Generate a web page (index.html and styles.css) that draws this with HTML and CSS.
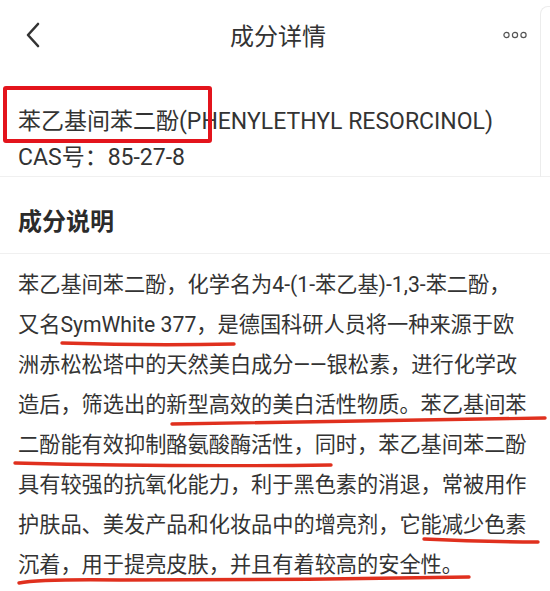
FILE: index.html
```html
<!DOCTYPE html>
<html lang="zh-CN">
<head>
  <meta charset="UTF-8">
  <meta name="viewport" content="width=device-width, initial-scale=1.0">
  <title>成分详情</title>
  <link rel="stylesheet" href="styles.css">
</head>
<body>

  <!-- Top bar -->
  <header class="topbar">
    <svg class="back" width="16" height="26" viewBox="0 0 16 26">
      <path d="M13 2 L3 13 L13 24" fill="none" stroke="#333" stroke-width="2.6" stroke-linecap="round" stroke-linejoin="round"/>
    </svg>
    <h1 class="topbar-title">成分详情</h1>
    <svg class="more" width="24" height="8" viewBox="0 0 24 8">
      <circle cx="3.5" cy="4" r="2.6" fill="none" stroke="#555" stroke-width="1.2"/>
      <circle cx="12" cy="4" r="2.6" fill="none" stroke="#555" stroke-width="1.2"/>
      <circle cx="20.5" cy="4" r="2.6" fill="none" stroke="#555" stroke-width="1.2"/>
    </svg>
  </header>

  <!-- Ingredient name -->
  <section class="info">
    <div class="info-name">苯乙基间苯二酚(PHENYLETHYL RESORCINOL)</div>
    <div class="info-cas">CAS号：85-27-8</div>
  </section>

  <!-- Description -->
  <section class="desc-head">
    <h2>成分说明</h2>
  </section>

  <section class="desc">
    <p>苯乙基间苯二酚，化学名为4-(1-苯乙基)-1,3-苯二酚，<br>又名SymWhite 377，是德国科研人员将一种来源于欧<br>洲赤松松塔中的天然美白成分——银松素，进行化学改<br>造后，筛选出的新型高效的美白活性物质。苯乙基间苯<br>二酚能有效抑制酪氨酸酶活性，同时，苯乙基间苯二酚<br>具有较强的抗氧化能力，利于黑色素的消退，常被用作<br>护肤品、美发产品和化妆品中的增亮剂，它能减少色素<br>沉着，用于提亮皮肤，并且有着较高的安全性。</p>
  </section>

  <!-- Hand drawn marks on top of the screenshot -->
  <div class="side-panel"></div>
  <div class="mark-box"></div>
  <svg class="marks" width="550" height="591" viewBox="0 0 550 591">
    <g fill="none" stroke="#e0301e" stroke-width="3.4" stroke-linecap="round">
      <path d="M62 343 Q150 346 234 344"/>
      <path d="M172 424 Q360 421 545 418"/>
      <path d="M15 463 Q170 467 331 465"/>
      <path d="M424 539 Q480 542 538 542"/>
      <path d="M19 583 Q40 579 120 580 Q300 580 469 577"/>
    </g>
  </svg>

</body>
</html>
```

FILE: styles.css
```css
body {
  margin: 0;
  width: 550px;
  height: 591px;
  overflow: hidden;
  position: relative;
  background: #fff;
  color: #333;
  font-family: Roboto, "Noto Sans CJK SC", sans-serif;
}
/* Top bar */
.topbar {
  height: 68px;
  display: flex;
  align-items: center;
  justify-content: space-between;
  padding: 0 23px 0 25px;
}
.back {
  margin-top: 2px;
}
.topbar-title {
  margin: 1px 0 0 12px;
  font-size: 24px;
  font-weight: 400;
  color: #333;
}
.more {
  margin-top: 2px;
}
/* Name block */
.info {
  height: 72px;
  padding: 36px 18px 0;
  border-bottom: 1px solid #f0f0f0;
  font-size: 23px;
  line-height: 36px;
}
.desc-head {
  height: 68px;
  display: flex;
  align-items: center;
  padding: 8px 18px 0;
  border-bottom: 1px solid #f0f0f0;
}
.desc-head h2 {
  margin: 0;
  font-size: 24px;
  font-weight: 700;
  color: #2b2b2b;
}
.desc {
  padding: 11px 18px 0;
}
.desc p {
  margin: 0;
  font-size: 21.2px;
  line-height: 40px;
  color: #333;
  white-space: nowrap;
}
/* Overlays */
.side-panel {
  position: absolute;
  left: 540px;
  top: 6px;
  width: 20px;
  height: 170px;
  border-left: 1px solid #ececec;
  border-top: 1px solid #ececec;
  border-top-left-radius: 8px;
}
.mark-box {
  position: absolute;
  left: 3px;
  top: 86px;
  width: 201px;
  height: 49px;
  border: 4px solid #e3141c;
  border-radius: 3px;
}
.marks {
  position: absolute;
  left: 0;
  top: 0;
  pointer-events: none;
}
```
